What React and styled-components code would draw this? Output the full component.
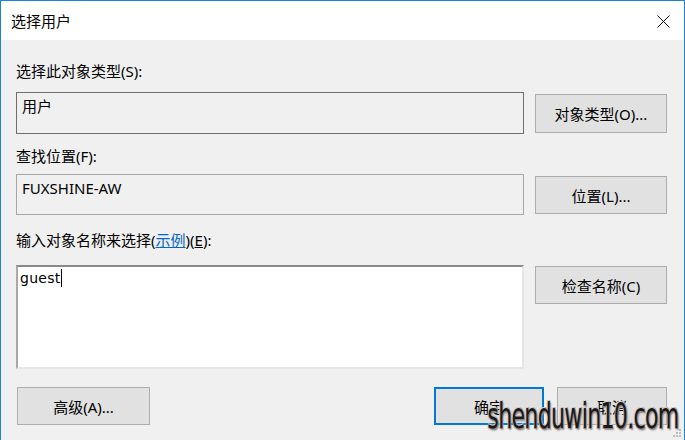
import React from 'react';
import styled, { createGlobalStyle } from 'styled-components';

const GlobalStyle = createGlobalStyle`
  html, body {
    margin: 0;
    padding: 0;
    background: #f0f0f0;
  }
  body {
    font-family: "Noto Sans", "Noto Sans CJK SC", sans-serif;
    font-size: 15px;
    color: #000;
  }
`;

const Window = styled.div`
  position: relative;
  width: 685px;
  height: 440px;
  box-sizing: border-box;
  border: 1px solid #1883d7;
  border-bottom: none;
  background: #f0f0f0;
  display: flex;
  flex-direction: column;
  overflow: hidden;
`;

const TitleBar = styled.div`
  height: 39px;
  background: #fff;
  display: flex;
  align-items: center;
  justify-content: space-between;
  padding: 0 14px 0 10px;
  flex-shrink: 0;
`;

const Title = styled.div`
  font-size: 15px;
  line-height: 20px;
  margin-top: 1px;
`;

const CloseIcon = styled.svg`
  width: 13px;
  height: 13px;
  margin-top: 1px;
`;

const Body = styled.div`
  display: flex;
  flex-direction: column;
  padding: 0 17px 0 15px;
`;

const Label = styled.div`
  height: 20px;
  line-height: 20px;
  margin-top: ${p => p.$top}px;
  white-space: nowrap;
`;

const Link = styled.span`
  color: #0066cc;
  text-decoration: underline;
`;

const Key = styled.span`
  text-decoration: underline;
`;

const Row = styled.div`
  display: grid;
  grid-template-columns: 508px 132px;
  column-gap: 11px;
  align-items: start;
  margin-top: ${p => p.$top}px;
`;

const Field = styled.div`
  height: ${p => p.$h}px;
  box-sizing: border-box;
  border: 1px solid ${p => p.$border};
  background: #f0f0f0;
  padding: 3px 5px 2px;
  line-height: 20px;
  white-space: nowrap;
`;

const TextArea = styled.div`
  height: 104px;
  box-sizing: border-box;
  background: #fff;
  border-top: 2px solid #8a8a8a;
  border-left: 2px solid #a8a8a8;
  border-right: 2px solid #e6e6e6;
  border-bottom: 2px solid #e6e6e6;
  padding: 1px 2px;
  line-height: 20px;
  font-family: "DejaVu Sans", "Noto Sans", sans-serif;
  font-size: 14px;
  letter-spacing: 0.3px;
`;

const Caret = styled.span`
  display: inline-block;
  width: 1px;
  height: 18px;
  background: #000;
  vertical-align: -4px;
`;

const Button = styled.button`
  width: ${p => p.$w || 132}px;
  height: ${p => p.$h || 39}px;
  margin-top: ${p => p.$top || 0}px;
  box-sizing: border-box;
  background: #e1e1e1;
  border: ${p => (p.$primary ? '2px solid #0078d7' : '1px solid #adadad')};
  font-family: "Noto Sans", "Noto Sans CJK SC", sans-serif;
  font-size: 15px;
  color: #000;
  padding: 0;
  white-space: nowrap;
`;

const Footer = styled.div`
  display: flex;
  align-items: center;
  margin-top: 18px;
  padding-left: 1px;
`;

const FooterRight = styled.div`
  display: flex;
  gap: 13px;
  margin-left: auto;
`;

const Watermark = styled.div`
  position: absolute;
  right: 5px;
  bottom: 4px;
  font-family: "DejaVu Sans", sans-serif;
  font-size: 36px;
  letter-spacing: -1px;
  line-height: 40px;
  color: #1a1a1a;
  transform: scaleX(0.61);
  transform-origin: right bottom;
  text-shadow: 1px 1px 0 #8c8080, -1px -1px 0 #d8d0d0, 1px -1px 0 #b0a8a8, -1px 1px 0 #b0a8a8, 2px 2px 2px #9a9090;
`;

const Grip = styled.svg`
  position: absolute;
  right: 2px;
  bottom: 2px;
  width: 10px;
  height: 10px;
`;

const App = () => {
  return (
    <>
      <GlobalStyle />
      <Window>
        <TitleBar>
          <Title>选择用户</Title>
          <CloseIcon viewBox="0 0 13 13">
            <path d="M0.5 0.5 L12.5 12.5 M12.5 0.5 L0.5 12.5" stroke="#111" strokeWidth="1" fill="none" />
          </CloseIcon>
        </TitleBar>
        <Body>
          <Label $top={21}>选择此对象类型(S):</Label>
          <Row $top={11}>
            <Field $h={42} $border="#6e6e6e">用户</Field>
            <Button $top={2}>对象类型(O)...</Button>
          </Row>
          <Label $top={12}>查找位置(F):</Label>
          <Row $top={8}>
            <Field $h={41} $border="#a6a6a6">FUXSHINE-AW</Field>
            <Button $top={2} $h={38}>位置(L)...</Button>
          </Row>
          <Label $top={15}>
            输入对象名称来选择(<Link>示例</Link>)(<Key>E</Key>):
          </Label>
          <Row $top={15}>
            <TextArea>
              guest<Caret />
            </TextArea>
            <Button $top={1} $h={38}>检查名称(C)</Button>
          </Row>
          <Footer>
            <Button $w={133} $h={38}>高级(A)...</Button>
            <FooterRight>
              <Button $w={110} $h={38} $primary>确定</Button>
              <Button $w={110} $h={38}>取消</Button>
            </FooterRight>
          </Footer>
        </Body>
        <Watermark>shenduwin10.com</Watermark>
        <Grip viewBox="0 0 10 10">
          <rect x="7" y="1" width="2" height="2" fill="#bdbdbd" />
          <rect x="4" y="4" width="2" height="2" fill="#bdbdbd" />
          <rect x="7" y="4" width="2" height="2" fill="#bdbdbd" />
          <rect x="1" y="7" width="2" height="2" fill="#bdbdbd" />
          <rect x="4" y="7" width="2" height="2" fill="#bdbdbd" />
          <rect x="7" y="7" width="2" height="2" fill="#bdbdbd" />
        </Grip>
      </Window>
    </>
  );
};

export default App;
